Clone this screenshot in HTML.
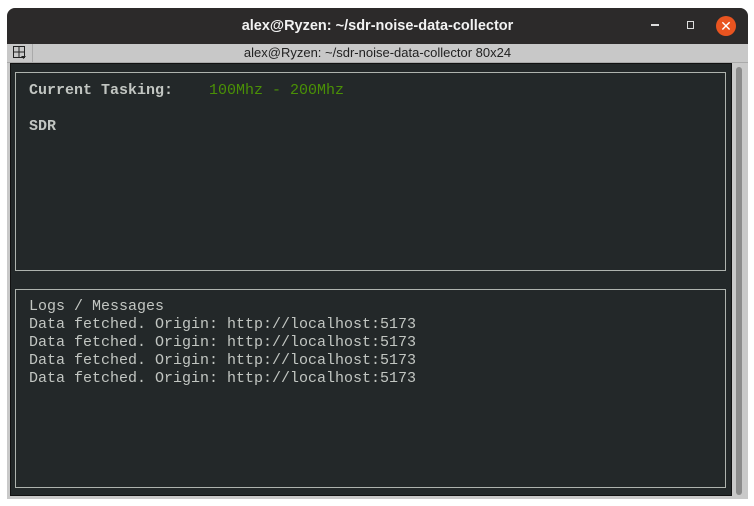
<!DOCTYPE html>
<html><head><style>
body{margin:0;width:754px;height:506px;background:#fff;position:relative;overflow:hidden;font-family:"Liberation Sans",sans-serif}
.win{position:absolute;left:7px;top:8px;width:741px;height:491px;background:#c9c9c9;border-radius:8px 8px 0 0;overflow:hidden}
.title{position:absolute;left:0;top:0;width:741px;height:36px;background:#2c2a2a;color:#f2f2f2;font-weight:bold;font-size:14.5px;line-height:36px;text-align:center}
.sub{position:absolute;left:0;top:36px;width:741px;height:18px;background:#c8c8c8;color:#222;font-size:13px;line-height:18px;text-align:center;border-bottom:1px solid #aaa}
.term{position:absolute;left:3px;top:55px;width:722px;height:433px;background:#232829;border:1px solid #111;box-sizing:border-box}
.sb{position:absolute;left:726px;top:55px;width:12px;height:434px;background:#c9c9c9}
.thumb{position:absolute;left:3px;top:4px;width:6px;height:428px;background:#8c8c8c;border-radius:3px}
.box{position:absolute;left:4px;width:711px;border:1px solid #aeb3ae;box-sizing:border-box}
.m{font-family:"Liberation Mono",monospace;font-size:15px;color:#c2c6c2;position:absolute;white-space:pre;line-height:18px}
</style></head><body>
<div class="win">
<div class="title">alex@Ryzen: ~/sdr-noise-data-collector</div>
<div style="position:absolute;left:644px;top:16px;width:8px;height:2px;background:#ddd"></div>
<div style="position:absolute;left:680px;top:13px;width:7px;height:8px;border:1.5px solid #ddd;box-sizing:border-box"></div>
<div style="position:absolute;left:709px;top:8px;width:20px;height:20px;border-radius:50%;background:#e95420;color:#fff;font-size:14px;line-height:20px;text-align:center">✕</div>
<div class="sub">alex@Ryzen: ~/sdr-noise-data-collector 80x24</div>
<div style="position:absolute;left:0;top:36px;width:25px;height:18px;border-right:1px solid #aaa"></div>
<svg style="position:absolute;left:6px;top:38px" width="14" height="14"><rect x="0.5" y="0.5" width="11" height="11" fill="none" stroke="#222"/><line x1="6" y1="0" x2="6" y2="12" stroke="#222"/><line x1="0" y1="6" x2="12" y2="6" stroke="#222"/><path d="M8 10h5l-2.5 3z" fill="#222"/></svg>
<div class="term">
<div class="box" style="top:8px;height:199px"></div>
<div class="box" style="top:225px;height:199px"></div>
<div class="m" style="left:18px;top:18px;font-weight:bold">Current Tasking:    <span style="font-weight:normal;color:#4a9006">100Mhz - 200Mhz</span></div>
<div class="m" style="left:18px;top:54px;font-weight:bold">SDR</div>
<div class="m" style="left:18px;top:234px">Logs / Messages
Data fetched. Origin: http://localhost:5173
Data fetched. Origin: http://localhost:5173
Data fetched. Origin: http://localhost:5173
Data fetched. Origin: http://localhost:5173</div>
</div>
<div class="sb"><div class="thumb"></div></div>
</div>
</body></html>
